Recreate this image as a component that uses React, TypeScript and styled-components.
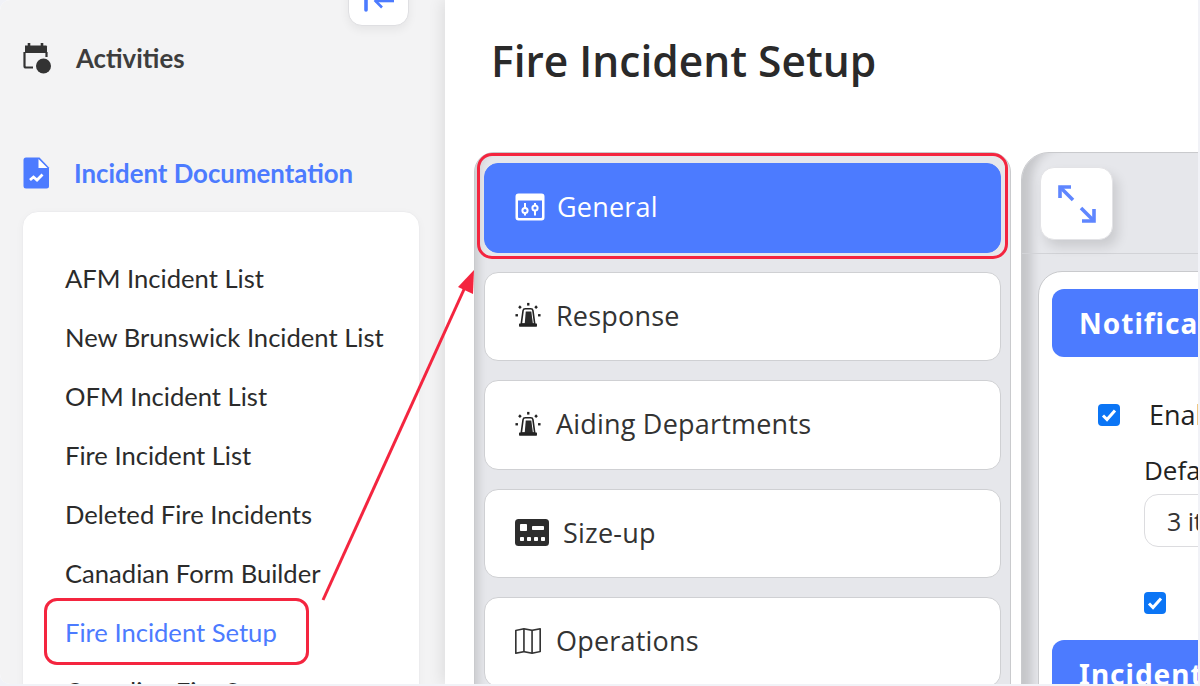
import React from "react";
import styled, { createGlobalStyle } from "styled-components";
import { BsMap } from "react-icons/bs";

const Global = createGlobalStyle`
  html, body { margin: 0; padding: 0; background: #f1f2f7; }
  * { box-sizing: border-box; }
`;

const Page = styled.div`
  position: relative;
  width: 1200px;
  height: 686px;
  overflow: hidden;
  padding: 0 2px 2px 0;
  background: #f1f2f7;
`;

const Frame = styled.div`
  display: flex;
  width: 100%;
  height: 100%;
  overflow: hidden;
  border-radius: 10px 0 0 10px;
  background: #fff;
`;

const Sidebar = styled.aside`
  position: relative;
  flex: 0 0 445px;
  padding: 35px 25px 0 22px;
  background: #f3f3f4;
  font-family: Lato, sans-serif;
`;

const CollapseButton = styled.div`
  position: absolute;
  top: -34px;
  left: 348px;
  width: 61px;
  height: 60px;
  display: flex;
  align-items: center;
  justify-content: center;
  background: #fff;
  border: 1px solid #dfdfe2;
  border-radius: 14px;
  box-shadow: 0 4px 10px rgba(0, 0, 0, 0.06);
`;

const SectionRow = styled.div<{ $active?: boolean; $gap: number; $mt?: number }>`
  display: flex;
  align-items: center;
  gap: ${(p) => p.$gap}px;
  height: 46px;
  margin-top: ${(p) => p.$mt ?? 0}px;
  margin-left: 1px;
  font-size: 25.8px;
  font-weight: 700;
  color: ${(p) => (p.$active ? "#4c7bff" : "#3d3d3d")};
`;

const SectionIcon = styled.svg`
  flex: none;
  display: block;
`;

const NavCard = styled.div`
  margin: 15px 0 0 0;
  padding: 36px 0 0 42px;
  height: 520px;
  background: #fff;
  border: 1px solid #ececee;
  border-radius: 16px;
  box-shadow: 0 2px 8px rgba(0, 0, 0, 0.03);
`;

const NavItem = styled.div<{ $active?: boolean }>`
  position: relative;
  display: flex;
  align-items: center;
  height: 59.1px;
  font-size: 25.6px;
  white-space: nowrap;
  color: ${(p) => (p.$active ? "#4c7bff" : "#2b2b2b")};
`;

const NavHighlight = styled.span`
  position: absolute;
  top: -5px;
  left: -21px;
  width: 265px;
  height: 67px;
  border: 3px solid #f4253f;
  border-radius: 13px;
`;

const Main = styled.main`
  flex: 1;
  min-width: 0;
  padding: 0 0 0 29px;
  background: #fff;
  box-shadow: -3px 0 14px rgba(0, 0, 0, 0.09);
  z-index: 1;
  font-family: "Open Sans", sans-serif;
`;

const Title = styled.h1`
  margin: 0;
  height: 152px;
  padding: 31px 0 0 17px;
  font-size: 42.5px;
  line-height: 60px;
  font-weight: 600;
  color: #2a2a2a;
`;

const Columns = styled.div`
  display: flex;
  gap: 10px;
  align-items: flex-start;
`;

const TabsPanel = styled.div`
  flex: 0 0 537px;
  display: flex;
  flex-direction: column;
  gap: 19px;
  height: 560px;
  padding: 10px 9px;
  background: #e6e7eb;
  border: 1px solid #c9cacd;
  border-radius: 20px;
  box-shadow: inset 10px 0 8px -6px rgba(0, 0, 0, 0.12);
`;

const Tab = styled.div<{ $active?: boolean }>`
  position: relative;
  flex: none;
  height: 89.5px;
  display: flex;
  align-items: center;
  padding: 0 0 2px 30px;
  font-size: 27px;
  letter-spacing: 0.2px;
  border-radius: 14px;
  color: ${(p) => (p.$active ? "#fff" : "#333")};
  background: ${(p) => (p.$active ? "#4c7bff" : "#fff")};
  border: 1px solid ${(p) => (p.$active ? "#4c7bff" : "#cfd0d3")};
`;

const TabHighlight = styled.span`
  position: absolute;
  top: -11px;
  left: -8px;
  right: -8px;
  bottom: -7px;
  border: 3px solid #f4253f;
  border-radius: 15px;
`;

const TabIconSlot = styled.span<{ $gap: number }>`
  display: flex;
  flex: none;
  align-items: center;
  margin-right: ${(p) => p.$gap}px;
`;

const DetailPanel = styled.div`
  flex: 0 0 600px;
  height: 560px;
  background: #e6e7eb;
  border: 1px solid #c9cacd;
  border-radius: 28px 0 0 0;
  box-shadow: inset 18px 0 10px -8px rgba(0, 0, 0, 0.14);
`;

const DetailBar = styled.div`
  height: 101px;
  padding: 14px 0 0 18px;
  border-bottom: 1px solid #d2d3d7;
`;

const ExpandButton = styled.div`
  width: 73px;
  height: 73px;
  display: flex;
  align-items: center;
  justify-content: center;
  background: #fff;
  border: 1px solid #e3e3e6;
  border-radius: 14px;
  box-shadow: 5px 7px 12px rgba(0, 0, 0, 0.12);
`;

const SettingsCard = styled.div`
  margin: 17px 0 0 16px;
  height: 500px;
  padding: 17px 0 0 13px;
  background: #fff;
  border: 1px solid #c9cacd;
  border-radius: 24px 0 0 0;
`;

const SectionButton = styled.div<{ $mt?: number }>`
  width: 500px;
  height: 68px;
  margin-top: ${(p) => p.$mt ?? 0}px;
  display: flex;
  align-items: center;
  padding-left: 27px;
  font-family: "Noto Sans", sans-serif;
  font-size: 28px;
  font-weight: 700;
  letter-spacing: 1px;
  color: #fff;
  background: #4c7bff;
  border-radius: 12px;
  white-space: nowrap;
`;

const CheckRow = styled.div<{ $indent: number; $mt: number; $gap: number }>`
  display: flex;
  align-items: center;
  gap: ${(p) => p.$gap}px;
  margin: ${(p) => p.$mt}px 0 0 ${(p) => p.$indent}px;
  font-size: 27px;
  color: #222;
  white-space: nowrap;
`;

const CheckBox = styled.span`
  flex: none;
  width: 22px;
  height: 22px;
  display: flex;
  align-items: center;
  justify-content: center;
  background: #0b75f5;
  border-radius: 4px;
`;

const FieldLabel = styled.div`
  margin: 19px 0 0 92px;
  font-size: 26px;
  line-height: 36px;
  color: #222;
  white-space: nowrap;
`;

const SelectBox = styled.div`
  width: 300px;
  height: 53px;
  margin: 6px 0 0 92px;
  padding-left: 22px;
  display: flex;
  align-items: center;
  font-size: 25px;
  color: #333;
  border: 1px solid #dcdcdf;
  border-radius: 14px;
`;

const ArrowOverlay = styled.svg`
  position: absolute;
  top: 0;
  left: 0;
  z-index: 5;
  pointer-events: none;
`;

const Siren = () => (
  <svg width="26" height="26" viewBox="0 0 29 28" fill="none">
    <path d="M7 24 L9 9 Q9.3 7 11.5 7 H17.5 Q19.7 7 20 9 L22 24 Z" fill="#fff" stroke="#222" strokeWidth="1.8" />
    <path d="M12 10 H18.2 L20 24 H10.8 Z" fill="#2b2b2b" />
    <rect x="4.5" y="23.5" width="20" height="3.5" rx="0.6" fill="#222" />
    <rect x="13.5" y="0.5" width="2.6" height="3" fill="#222" />
    <rect x="4.2" y="3.8" width="2.8" height="2.8" fill="#222" transform="rotate(45 5.5 5.1)" />
    <rect x="22.2" y="3.8" width="2.8" height="2.8" fill="#222" transform="rotate(45 23.5 5.1)" />
    <rect x="0.5" y="13" width="2.8" height="2.6" fill="#222" />
    <rect x="25.7" y="13" width="2.8" height="2.6" fill="#222" />
  </svg>
);

const Sliders = () => (
  <svg width="30" height="28" viewBox="0 0 30 28" fill="none">
    <path d="M3.5 0.5 H26.5 Q29.5 0.5 29.5 3.5 V24.5 Q29.5 27.5 26.5 27.5 H3.5 Q0.5 27.5 0.5 24.5 V3.5 Q0.5 0.5 3.5 0.5 Z M3 7.5 V24 Q3 25 4 25 H26 Q27 25 27 24 V7.5 Z" fill="#fff" fillRule="evenodd" />
    <g stroke="#fff" strokeWidth="2">
      <path d="M10 10 V22.5" />
      <path d="M20 10 V22.5" />
    </g>
    <circle cx="10" cy="17.5" r="2.6" fill="#4c7bff" stroke="#fff" strokeWidth="2" />
    <circle cx="20" cy="15" r="2.6" fill="#4c7bff" stroke="#fff" strokeWidth="2" />
  </svg>
);

const SizeUp = () => (
  <svg width="34" height="27" viewBox="0 0 34 27">
    <rect width="34" height="27" rx="3.5" fill="#2d2d2d" />
    <rect x="5" y="5" width="7" height="7" rx="0.8" fill="#fff" />
    <rect x="17" y="7" width="12" height="4" rx="0.8" fill="#fff" />
    <rect x="5" y="18" width="4" height="4" rx="0.8" fill="#fff" />
    <rect x="12" y="18" width="4" height="4" rx="0.8" fill="#fff" />
    <rect x="19" y="18" width="4" height="4" rx="0.8" fill="#fff" />
    <rect x="26" y="18" width="4" height="4" rx="0.8" fill="#fff" />
  </svg>
);

const Check = () => (
  <svg width="16" height="14" viewBox="0 0 16 14" fill="none">
    <path d="M2 7.5 L6 11.5 L14 2.5" stroke="#fff" strokeWidth="3" />
  </svg>
);

const items = [
  "AFM Incident List",
  "New Brunswick Incident List",
  "OFM Incident List",
  "Fire Incident List",
  "Deleted Fire Incidents",
  "Canadian Form Builder",
  "Fire Incident Setup",
  "Canadian Fire Setup",
];

export default function App() {
  return (
    <Page>
      <Global />
      <Frame>
        <Sidebar>
          <CollapseButton>
            <svg width="32" height="48" viewBox="0 0 32 48" fill="none">
              <path d="M3 10 V38" stroke="#4c7bff" strokeWidth="3.6" strokeLinecap="round" />
              <path d="M12 29 H31" stroke="#4c7bff" strokeWidth="2.6" />
              <path d="M19 22 L12.5 29 L19 35.5" stroke="#4c7bff" strokeWidth="2.6" />
            </svg>
          </CollapseButton>
          <SectionRow $gap={25}>
            <SectionIcon width="28" height="32" viewBox="0 0 28 32" fill="none">
              <path d="M6 1 V5 M19 1 V5" stroke="#333" strokeWidth="2.6" />
              <path d="M2 3.5 H23 Q24 3.5 24 4.5 V11 H2 Z" fill="#333" />
              <path d="M1.5 10 V24 Q1.5 25.5 3 25.5 H10 M23.5 10 V15" stroke="#333" strokeWidth="2.2" />
              <circle cx="20.5" cy="24" r="7.5" fill="#333" />
            </SectionIcon>
            Activities
          </SectionRow>
          <SectionRow $active $gap={24} $mt={69}>
            <SectionIcon width="27" height="32" viewBox="0 0 27 32">
              <path d="M3 0.5 H16.5 L26 10.5 V29 Q26 31.5 23.5 31.5 H3 Q0.5 31.5 0.5 29 V3 Q0.5 0.5 3 0.5 Z" fill="#4c7bff" />
              <path d="M15.5 2 L24.5 11 H15.5 Z" fill="#fff" />
              <path d="M7 23 L10.5 20 L14 23 L19.5 17.5" stroke="#fff" strokeWidth="2.8" fill="none" />
            </SectionIcon>
            Incident Documentation
          </SectionRow>
          <NavCard>
            {items.map((label) => (
              <NavItem key={label} $active={label === "Fire Incident Setup"}>
                {label === "Fire Incident Setup" && <NavHighlight />}
                {label}
              </NavItem>
            ))}
          </NavCard>
        </Sidebar>
        <Main>
          <Title>Fire Incident Setup</Title>
          <Columns>
            <TabsPanel>
              <Tab $active>
                <TabHighlight />
                <TabIconSlot $gap={12}><Sliders /></TabIconSlot>
                General
              </Tab>
              <Tab>
                <TabIconSlot $gap={15}><Siren /></TabIconSlot>
                Response
              </Tab>
              <Tab>
                <TabIconSlot $gap={15}><Siren /></TabIconSlot>
                Aiding Departments
              </Tab>
              <Tab>
                <TabIconSlot $gap={14}><SizeUp /></TabIconSlot>
                Size-up
              </Tab>
              <Tab>
                <TabIconSlot $gap={15}><BsMap size={26} color="#333" /></TabIconSlot>
                Operations
              </Tab>
            </TabsPanel>
            <DetailPanel>
              <DetailBar>
                <ExpandButton>
                  <svg width="38" height="38" viewBox="0 0 38 38" fill="none" stroke="#5f86ff" strokeWidth="3.6">
                    <path d="M2 13 V2 H13" />
                    <path d="M2 2 L15 15" />
                    <path d="M36 24 V36 H24" />
                    <path d="M36 36 L23 23" />
                  </svg>
                </ExpandButton>
              </DetailBar>
              <SettingsCard>
                <SectionButton>Notifications</SectionButton>
                <CheckRow $indent={46} $mt={39} $gap={29}>
                  <CheckBox><Check /></CheckBox>
                  Enable Notifications
                </CheckRow>
                <FieldLabel>Default Period</FieldLabel>
                <SelectBox>3 items</SelectBox>
                <CheckRow $indent={92} $mt={45} $gap={30}>
                  <CheckBox><Check /></CheckBox>
                </CheckRow>
                <SectionButton $mt={26}>Incident Settings</SectionButton>
              </SettingsCard>
            </DetailPanel>
          </Columns>
        </Main>
      </Frame>
      <ArrowOverlay width="1200" height="686" viewBox="0 0 1200 686" fill="none">
        <path d="M323 600 L466 285" stroke="#f4253f" strokeWidth="3" />
        <path d="M474 270 L473 294 L458 287 Z" fill="#f4253f" />
      </ArrowOverlay>
    </Page>
  );
}
